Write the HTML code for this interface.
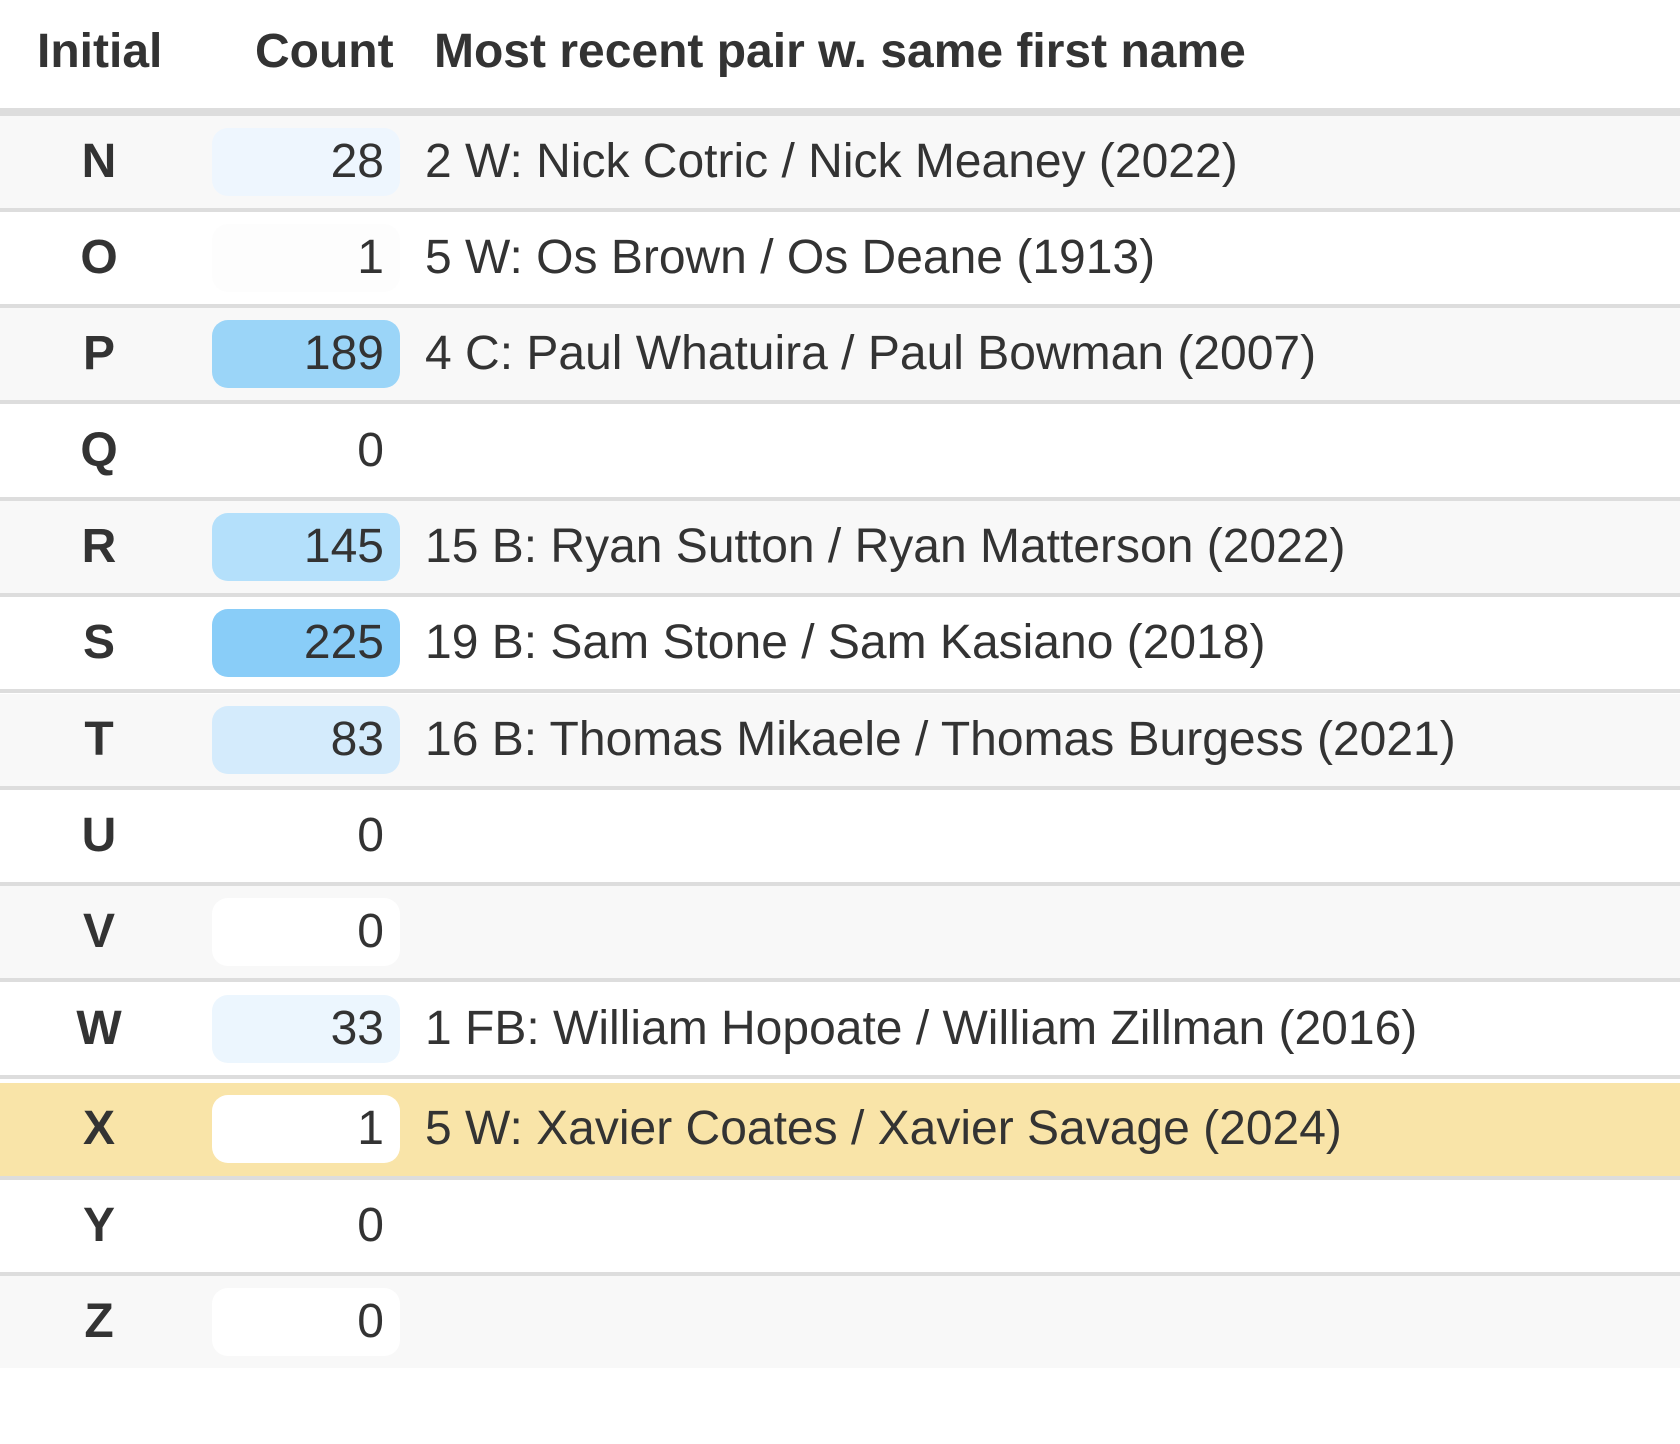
<!DOCTYPE html>
<html><head><meta charset="utf-8"><style>
body{margin:0;width:1680px;height:1444px;background:#fff;font-family:"Liberation Sans",Arial,sans-serif;color:#333;position:relative;overflow:hidden}
.h{position:absolute;top:0;left:0;width:1680px;height:108px;border-bottom:8px solid #ddd;font-weight:bold;font-size:48px}
.h span{position:absolute;top:26px;line-height:52px}
.r{position:absolute;left:0;width:1680px;height:92px;font-size:48px}
.r.b{border-bottom:4px solid #ddd}
.i{position:absolute;left:0;width:198px;text-align:center;font-weight:bold;top:0;line-height:92px}
.c{position:absolute;left:212px;width:172px;padding-right:16px;top:12px;height:68px;line-height:68px;border-radius:16px;text-align:right}
.t{position:absolute;left:425px;top:0;line-height:92px;white-space:nowrap}
</style></head><body>
<div class="h"><span style="left:37px">Initial</span><span style="left:255px">Count</span><span style="left:434px">Most recent pair w. same first name</span></div>

<div class="r b" style="top:116px;background:#f8f8f8"><div class="i">N</div><div class="c" style="background:#eef6fe">28</div><div class="t">2 W: Nick Cotric / Nick Meaney (2022)</div></div>
<div class="r b" style="top:212px;background:#fff"><div class="i">O</div><div class="c" style="background:#fdfdfd">1</div><div class="t">5 W: Os Brown / Os Deane (1913)</div></div>
<div class="r b" style="top:308px;background:#f8f8f8"><div class="i">P</div><div class="c" style="background:#9bd5f8">189</div><div class="t">4 C: Paul Whatuira / Paul Bowman (2007)</div></div>
<div class="r b" style="top:405px;background:#fff"><div class="i">Q</div><div class="c" style="background:#fff">0</div></div>
<div class="r b" style="top:501px;background:#f8f8f8"><div class="i">R</div><div class="c" style="background:#b4e0fb">145</div><div class="t">15 B: Ryan Sutton / Ryan Matterson (2022)</div></div>
<div class="r b" style="top:597px;background:#fff"><div class="i">S</div><div class="c" style="background:#89cdf8">225</div><div class="t">19 B: Sam Stone / Sam Kasiano (2018)</div></div>
<div class="r b" style="top:694px;background:#f8f8f8"><div class="i">T</div><div class="c" style="background:#d4ebfc">83</div><div class="t">16 B: Thomas Mikaele / Thomas Burgess (2021)</div></div>
<div class="r b" style="top:790px;background:#fff"><div class="i">U</div><div class="c" style="background:#fff">0</div></div>
<div class="r b" style="top:886px;background:#f8f8f8"><div class="i">V</div><div class="c" style="background:#fff">0</div></div>
<div class="r b" style="top:983px;background:#fff"><div class="i">W</div><div class="c" style="background:#ecf6fe">33</div><div class="t">1 FB: William Hopoate / William Zillman (2016)</div></div>
<div class="r b" style="top:1083px;background:#f9e4a8;height:93px"><div class="i">X</div><div class="c" style="background:#fff">1</div><div class="t">5 W: Xavier Coates / Xavier Savage (2024)</div></div>
<div class="r b" style="top:1180px;background:#fff"><div class="i">Y</div><div class="c" style="background:#fff">0</div></div>
<div class="r" style="top:1276px;background:#f8f8f8"><div class="i">Z</div><div class="c" style="background:#fff">0</div></div>
</body></html>
